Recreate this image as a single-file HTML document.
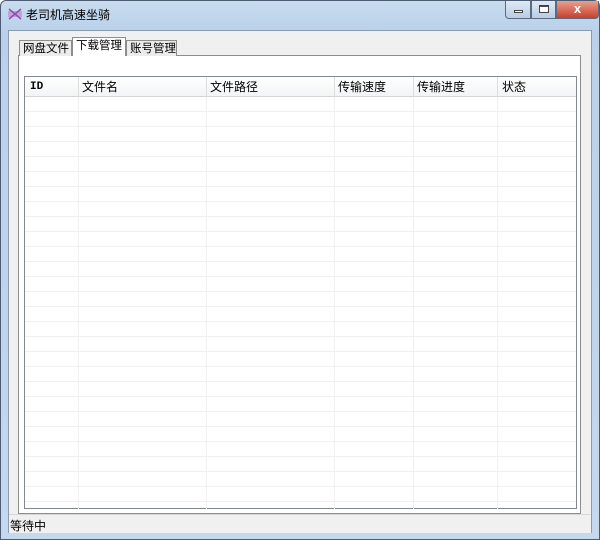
<!DOCTYPE html>
<html><head><meta charset="utf-8"><style>
*{margin:0;padding:0;box-sizing:border-box}
body{width:600px;height:540px;overflow:hidden;background:#fff;font-family:"Liberation Sans","Noto Sans CJK SC",sans-serif;font-size:12px;position:relative}
.frame{position:absolute;left:0;top:0;width:600px;height:540px;background:linear-gradient(180deg,#c9dcef 0,#b9d1ea 30px,#c4d8ee 100%);border:1px solid #4b5c73;border-radius:6px 6px 0 0}
.title{position:absolute;left:26px;top:6px;font-size:12px;color:#000}
.client{position:absolute;left:8px;top:30px;width:584px;height:503px;background:#f0f0f0;border:1px solid #8c9cb0}
.tab{position:absolute;top:38px;height:18px;border:1px solid #8d8d8d;border-bottom:none;background:#ececec;padding:1px 0 0 3px;font-size:11.5px;line-height:14px;white-space:nowrap;overflow:visible}
.panel{position:absolute;left:18px;top:55px;width:563px;height:459px;border:1px solid #8d8d8d;background:#fff}
.lv{position:absolute;left:24px;top:76px;width:553px;height:433px;border:1px solid #828790;background:#fff;
background-image:repeating-linear-gradient(180deg,transparent 0,transparent 14px,#f0f0f0 14px,#f0f0f0 15px);background-position:0 20px}
.hdr{position:absolute;left:25px;top:77px;width:551px;height:20px;background:linear-gradient(#fff,#f3f4f6);border-bottom:1px solid #d5d5d5;font-size:12px}
.hdr span{position:absolute;top:0;line-height:21px}
.vl{position:absolute;top:77px;height:432px;width:1px;background:#f0f0f0}
.hl{position:absolute;top:77px;height:20px;width:1px;background:#dedede}
.status{position:absolute;left:9px;top:514px;width:582px;height:19px;background:#f0f0f0;border-top:1px solid #d8d8d8}
.status span{position:absolute;left:1px;top:2px}
.btn{position:absolute;top:1px;height:18px;border:1px solid #5a6b80;border-top:none}
</style></head><body>
<div class="frame"></div>
<svg style="position:absolute;left:7px;top:7px" width="16" height="14"><rect x="1" y="4" width="14" height="6" fill="#c8a0d8"/><path d="M2 2 L14 12 M14 2 L2 12" stroke="#8a50b0" stroke-width="1.5"/></svg>
<div class="title">老司机高速坐骑</div>
<div class="btn" style="left:505px;width:26px;background:linear-gradient(#dfe9f5,#b8cde6);border-radius:0 0 0 4px"><div style="position:absolute;left:8px;top:9px;width:9px;height:3px;background:#fff;border:1px solid #444"></div></div>
<div class="btn" style="left:531px;width:25px;background:linear-gradient(#dfe9f5,#b8cde6)"><div style="position:absolute;left:7px;top:4px;width:10px;height:8px;border:1px solid #444;border-top-width:2px;background:#fff"></div></div>
<div class="btn" style="left:556px;width:43px;background:linear-gradient(#e8a090,#c8402a);border-radius:0 0 4px 0;color:#fff;font-weight:bold;text-align:center;font-size:13px;line-height:16px">x</div>
<div class="client"></div>
<div class="panel"></div>
<div class="tab" style="left:19px;top:40px;height:16px;width:53px">网盘文件</div>
<div class="tab" style="left:72px;top:37px;height:19px;width:54px;background:#fff;z-index:2">下载管理</div>
<div class="tab" style="left:126px;top:40px;height:16px;width:51px">账号管理</div>
<div class="lv"></div>
<div class="vl" style="left:78px"></div><div class="vl" style="left:206px"></div><div class="vl" style="left:334px"></div><div class="vl" style="left:413px"></div><div class="vl" style="left:497px"></div>
<div class="hdr"><span style="left:5px;font-family:'Liberation Mono',monospace;font-weight:bold;font-size:11px">ID</span><span style="left:57px">文件名</span><span style="left:185px">文件路径</span><span style="left:313px">传输速度</span><span style="left:392px">传输进度</span><span style="left:477px">状态</span></div>
<div class="hl" style="left:78px"></div><div class="hl" style="left:206px"></div><div class="hl" style="left:334px"></div><div class="hl" style="left:413px"></div><div class="hl" style="left:497px"></div>
<div class="status"><span>等待中</span></div>
</body></html>
